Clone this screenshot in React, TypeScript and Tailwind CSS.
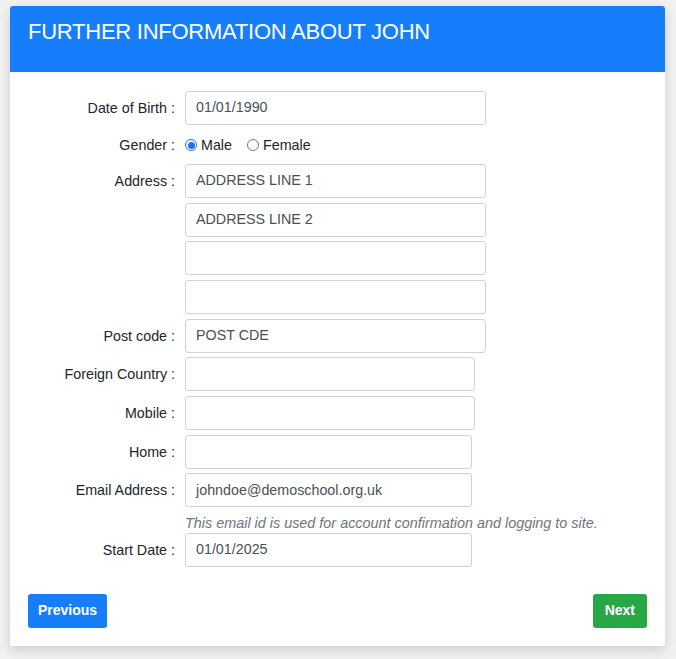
import React from "react";

const font = { fontFamily: '"Liberation Sans", Arial, sans-serif' };

function Row({ label, children }: { label: string; children: React.ReactNode }) {
  return (
    <div className="flex items-start">
      <div className="w-[147px] shrink-0 text-right text-[14.3px] text-[#212529] pt-[7px]">{label}</div>
      <div className="ml-[10px]">{children}</div>
    </div>
  );
}

function Input({ value, w }: { value: string; w: string }) {
  return (
    <div className={`${w} h-[34px] border border-[#ced4da] rounded-[3px] bg-white text-[14.3px] text-[#495057] pl-[10px] flex items-center`}>
      {value}
    </div>
  );
}

export default function App() {
  return (
    <div className="w-[676px] h-[659px] bg-[#f1f1f1] pt-[6px] pl-[10px]" style={font}>
      <div className="w-[655px] h-[640px] bg-white rounded-[3px] shadow-[0_4px_12px_rgba(0,0,0,0.15)] overflow-hidden flex flex-col">
        <div className="h-[66px] bg-[#167efb] px-[18px] pt-[9px] text-white text-[22px] tracking-[-0.25px]">
          FURTHER INFORMATION ABOUT JOHN
        </div>
        <div className="px-[18px] pt-[19px] flex flex-col gap-[4.67px]">
          <Row label="Date of Birth :"><Input value="01/01/1990" w="w-[301px]" /></Row>
          <div className="flex items-center h-[29.67px] pt-[2px]">
            <div className="w-[147px] shrink-0 text-right text-[14.3px] text-[#212529]">Gender :</div>
            <div className="ml-[10px] flex items-center text-[14.3px] text-[#212529]">
              <span className="w-[12px] h-[12px] rounded-full border border-[#1a73e8] flex items-center justify-center">
                <span className="w-[7px] h-[7px] rounded-full bg-[#1a73e8]" />
              </span>
              <span className="ml-[4px]">Male</span>
              <span className="ml-[15px] w-[12px] h-[12px] rounded-full border border-[#767676]" />
              <span className="ml-[4px]">Female</span>
            </div>
          </div>
          <Row label="Address :">
            <div className="flex flex-col gap-[4.67px]">
              <Input value="ADDRESS LINE 1" w="w-[301px]" />
              <Input value="ADDRESS LINE 2" w="w-[301px]" />
              <Input value="" w="w-[301px]" />
              <Input value="" w="w-[301px]" />
            </div>
          </Row>
          <Row label="Post code :"><Input value="POST CDE" w="w-[301px]" /></Row>
          <Row label="Foreign Country :"><Input value="" w="w-[290px]" /></Row>
          <Row label="Mobile :"><Input value="" w="w-[290px]" /></Row>
          <Row label="Home :"><Input value="" w="w-[287px]" /></Row>
          <Row label="Email Address :">
            <Input value="johndoe@demoschool.org.uk" w="w-[287px]" />
            <div className="h-[21px] pt-[8px] text-[14.4px] italic text-[#6c757d] whitespace-nowrap leading-[16px]">
              This email id is used for account confirmation and logging to site.
            </div>
          </Row>
          <Row label="Start Date :"><Input value="01/01/2025" w="w-[287px]" /></Row>
        </div>
        <div className="px-[18px] mt-[27px] flex justify-between">
          <button className="h-[34px] px-[10px] bg-[#167efb] text-white text-[14px] font-bold rounded-[3px]" style={font}>Previous</button>
          <button className="h-[34px] px-[12px] bg-[#28a745] text-white text-[14px] font-bold rounded-[3px]" style={font}>Next</button>
        </div>
      </div>
    </div>
  );
}
